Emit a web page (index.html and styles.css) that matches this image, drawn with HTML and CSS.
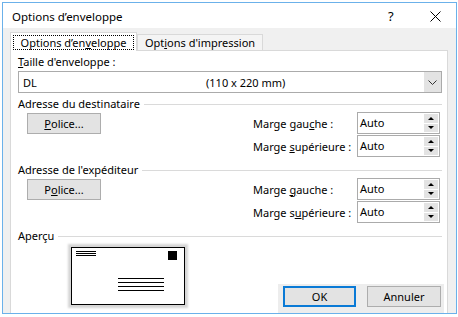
FILE: index.html
```html
<!DOCTYPE html>
<html lang="fr">
<head>
<meta charset="utf-8">
<title>Options d’enveloppe</title>
<link rel="stylesheet" href="styles.css">
</head>
<body>
<div class="window">
  <div class="titlebar">
    <span class="title">Options d’enveloppe</span>
    <span class="help">?</span>
    <span class="close">
      <svg width="11" height="11" viewBox="0 0 11 11"><path d="M0.5 0.5L10.5 10.5M10.5 0.5L0.5 10.5" stroke="#000" stroke-width="1" fill="none"/></svg>
    </span>
  </div>

  <div class="client">
    <div class="tabs">
      <div class="tab active"><span class="focus">Options d’en<u>v</u>eloppe</span></div>
      <div class="tab">Opt<u>i</u>ons d'impression</div>
    </div>

    <div class="panel">
      <div class="field-label"><u>T</u>aille d'enveloppe :</div>
      <div class="combo">
        <span class="combo-value">DL</span>
        <span class="combo-size">(110 x 220 mm)</span>
        <span class="combo-btn">
          <svg width="9" height="5" viewBox="0 0 9 5"><path d="M0.5 0.5L4.5 4.5L8.5 0.5" stroke="#333" stroke-width="1" fill="none"/></svg>
        </span>
      </div>

      <div class="group-title first"><span>Adresse du destinataire</span></div>
      <div class="address">
        <button class="btn police"><u>P</u>olice...</button>
        <label class="margin-label">Marge gau<u>c</u>he :</label>
        <div class="spin"><span class="spin-value">Auto</span><span class="spin-btns"><span class="up"></span><span class="down"></span></span></div>
        <label class="margin-label">Marge <u>s</u>upérieure :</label>
        <div class="spin"><span class="spin-value">Auto</span><span class="spin-btns"><span class="up"></span><span class="down"></span></span></div>
      </div>

      <div class="group-title"><span>Adresse de l'expéditeur</span></div>
      <div class="address">
        <button class="btn police">P<u>o</u>lice...</button>
        <label class="margin-label">Marge <u>g</u>auche :</label>
        <div class="spin"><span class="spin-value">Auto</span><span class="spin-btns"><span class="up"></span><span class="down"></span></span></div>
        <label class="margin-label">Marge s<u>u</u>périeure :</label>
        <div class="spin"><span class="spin-value">Auto</span><span class="spin-btns"><span class="up"></span><span class="down"></span></span></div>
      </div>

      <div class="group-title"><span>Aperçu</span></div>
      <div class="preview">
        <div class="envelope">
          <div class="envelope-top">
            <div class="sender-lines"><i></i><i></i><i></i></div>
            <div class="stamp"></div>
          </div>
          <div class="recipient-lines"><i></i><i></i><i></i><i></i></div>
        </div>
      </div>
    </div>

    <div class="actions">
      <button class="btn default">OK</button>
      <button class="btn">Annuler</button>
    </div>
  </div>
</div>
</body>
</html>
```

FILE: styles.css
```css
body {
 margin: 2px 0 0 2px;
 background: #fff;
 font-family: "Noto Sans", "Open Sans", sans-serif;
 font-size: 11px;
 color: #000;
}

.window {
 width: 455px;
 height: 312px;
 box-sizing: border-box;
 border: 1px solid #6bb1ea;
 display: flex;
 flex-direction: column;
 background: #f0f0f0;
}

.titlebar {
 height: 25px;
 flex: none;
 background: #fff;
 display: flex;
 align-items: center;
 padding-left: 9px;
}
.title { flex: 1; padding-top: 2px; font-size: 11.5px; }
.help { width: 42px; font-size: 13px; padding-top: 1px; }
.close { width: 26px; display: flex; padding-top: 1px; }

.client {
 flex: 1;
 position: relative;
 display: flex;
 flex-direction: column;
 padding: 4px 8px 0 7px;
 min-height: 0;
}

/* tabs */
.tabs {
 display: flex;
 align-items: flex-end;
 margin-bottom: -1px;
}
.tab {
 box-sizing: border-box;
 width: 126px;
 height: 17px;
 border: 1px solid #d9d9d9;
 border-bottom: none;
 background: #f4f4f4;
 line-height: 16px;
 text-align: center;
 white-space: nowrap;
}
.tab.active {
 width: 127px;
 height: 19px;
 background: #fff;
 position: relative;
 z-index: 1;
 padding: 2px 2px 0;
 line-height: 15px;
}
.focus {
 display: block;
 outline: 1px dotted #000;
 outline-offset: -1px;
 height: 15px;
}

.panel {
 flex: 1;
 background: #fff;
 border: 1px solid #d9d9d9;
 border-bottom: none;
 padding: 3px 5px 0 7px;
}

.field-label { line-height: 16px; height: 17px; }

.combo {
 box-sizing: border-box;
 height: 22px;
 border: 1px solid #ababab;
 display: flex;
 align-items: center;
}
.combo-value { padding-left: 4px; width: 183px; }
.combo-size { flex: 1; }
.combo-btn {
 width: 17px;
 align-self: stretch;
 background: #e3e3e3;
 display: flex;
 align-items: center;
 justify-content: center;
}

.group-title {
 display: flex;
 align-items: center;
 line-height: 16px;
 margin-top: 5px;
}
.group-title.first { margin-top: 3px; }
.group-title::after {
 content: "";
 flex: 1;
 border-top: 1px solid #dadada;
 margin-left: 4px;
 margin-top: 1px;
}

.address {
 display: grid;
 grid-template-columns: 1fr 104px 83px;
 grid-template-rows: 22px 22px;
 row-gap: 1px;
 margin-right: 2px;
}
.police {
 grid-row: 1;
 grid-column: 1;
 justify-self: start;
 margin: 1px 0 0 9px;
}
.margin-label {
 grid-column: 2;
 align-self: center;
 white-space: nowrap;
}

.btn {
 box-sizing: border-box;
 width: 74px;
 height: 21px;
 border: 1px solid #adadad;
 background: #e3e3e3;
 font: inherit;
 color: #000;
 padding: 0;
}
.btn.default { border: 2px solid #0a7ad6; width: 73px; }

.spin {
 grid-column: 3;
 box-sizing: border-box;
 border: 1px solid #ababab;
 display: flex;
 background: #fff;
}
.spin-value { flex: 1; padding-left: 2px; line-height: 19px; }
.spin-btns {
 width: 14px;
 margin: 1px 1px 1px 0;
 display: flex;
 flex-direction: column;
 gap: 1px;
}
.spin-btns span {
 flex: 1;
 background: #e3e3e3;
 display: flex;
 align-items: center;
 justify-content: center;
}
.spin-btns .up::before {
 content: "";
 border: 3px solid transparent;
 border-bottom: 3px solid #000;
 border-top: none;
}
.spin-btns .down::before {
 content: "";
 border: 3px solid transparent;
 border-top: 3px solid #000;
 border-bottom: none;
}

/* envelope preview */
.preview { padding: 3px 0 0 53px; }
.envelope {
 box-sizing: border-box;
 width: 114px;
 height: 58px;
 border: 1px solid #000;
 background: #fff;
 box-shadow: 0 0 2px 3px #d6d6d6;
 padding: 2px 7px 0 4px;
}
.envelope-top { display: flex; justify-content: space-between; }
.sender-lines { display: flex; flex-direction: column; gap: 1px; padding-top: 1px; }
.sender-lines i, .recipient-lines i {
 display: block;
 height: 1px;
 background: #000;
}
.sender-lines i { width: 20px; }
.stamp { width: 9px; height: 9px; background: #000; margin-top: 1px; }
.recipient-lines {
 display: flex;
 flex-direction: column;
 gap: 3px;
 margin: 18px 0 0 42px;
}
.recipient-lines i { width: 46px; }

/* dialog buttons */
.actions {
 position: absolute;
 left: 275px;
 top: 256px;
 width: 166px;
 height: 29px;
 background: #ededed;
 display: flex;
 gap: 11px;
 padding: 2px 0 0 5px;
 box-sizing: border-box;
}
```
